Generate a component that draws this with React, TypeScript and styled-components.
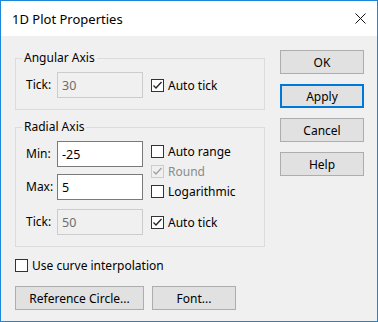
import styled, { createGlobalStyle } from "styled-components";

const GlobalStyle = createGlobalStyle`
  html, body {
    margin: 0;
    padding: 0;
    background: #ffffff;
  }
  * {
    box-sizing: border-box;
  }
`;

const uiFont = `"Noto Sans", "Open Sans", "Liberation Sans", sans-serif`;

const Window = styled.div`
  width: 378px;
  height: 322px;
  border: 1px solid #1c86d9;
  display: flex;
  flex-direction: column;
  font-family: ${uiFont};
  font-size: 12px;
  color: #000000;
`;

const TitleBar = styled.div`
  height: 35px;
  background: #ffffff;
  display: flex;
  align-items: center;
  justify-content: space-between;
  padding: 0 11px 0 11px;
`;

const Title = styled.span`
  font-size: 13px;
  color: #000000;
`;

const Body = styled.div`
  flex: 1;
  background: #f0f0f0;
  display: flex;
  gap: 15px;
  padding: 14px 12px 0 14px;
`;

const LeftCol = styled.div`
  width: 250px;
  display: flex;
  flex-direction: column;
`;

const RightCol = styled.div`
  width: 84px;
  display: flex;
  flex-direction: column;
  gap: 10px;
`;

const GroupBox = styled.fieldset<{ $top?: number }>`
  margin: ${(p) => p.$top ?? 0}px 0 0 0;
  padding: 0 10px 11px 10px;
  border: 1px solid #dcdcdc;
  min-width: 0;
`;

const Legend = styled.legend`
  margin-left: -4px;
  padding: 0 2px;
  line-height: 16px;
  font-size: 12px;
`;

const GroupContent = styled.div`
  margin-top: 6px;
  display: flex;
  flex-direction: column;
`;

const FieldRow = styled.div<{ $gap?: number }>`
  display: flex;
  align-items: center;
  margin-top: ${(p) => p.$gap ?? 0}px;
`;

const FieldLabel = styled.span`
  width: 31px;
  line-height: 16px;
`;

const TextBox = styled.div<{ $disabled?: boolean }>`
  width: 86px;
  height: 26px;
  padding: 0 4px;
  display: flex;
  align-items: center;
  background: ${(p) => (p.$disabled ? "#f0f0f0" : "#ffffff")};
  border: 1px solid ${(p) => (p.$disabled ? "#cccccc" : "#7a7a7a")};
  color: ${(p) => (p.$disabled ? "#6d6d6d" : "#000000")};
  font-size: 12.5px;
`;

const Split = styled.div`
  display: flex;
`;

const InputStack = styled.div`
  display: flex;
  flex-direction: column;
  gap: 7px;
`;

const CheckStack = styled.div`
  display: flex;
  flex-direction: column;
  margin-left: 8px;
`;

const CheckItem = styled.div<{ $disabled?: boolean }>`
  display: flex;
  align-items: center;
  height: 20px;
  color: ${(p) => (p.$disabled ? "#8a8a8a" : "#000000")};
`;

const Box = styled.span<{ $disabled?: boolean }>`
  width: 13px;
  height: 13px;
  flex: none;
  margin-right: 4px;
  background: ${(p) => (p.$disabled ? "#f0f0f0" : "#ffffff")};
  border: 1px solid ${(p) => (p.$disabled ? "#cccccc" : "#333333")};
  display: flex;
  align-items: center;
  justify-content: center;
`;

const ButtonRow = styled.div`
  display: flex;
  gap: 8px;
  margin-top: 11px;
`;

const Button = styled.div<{ $width?: number; $focused?: boolean }>`
  width: ${(p) => p.$width ?? 84}px;
  height: 24px;
  display: flex;
  align-items: center;
  justify-content: center;
  background: #e1e1e1;
  border: ${(p) => (p.$focused ? "2px solid #0078d7" : "1px solid #adadad")};
  font-size: 12px;
`;

function Check({
  label,
  checked,
  disabled,
}: {
  label: string;
  checked?: boolean;
  disabled?: boolean;
}) {
  return (
    <CheckItem $disabled={disabled}>
      <Box $disabled={disabled}>
        {checked && (
          <svg width="11" height="11" viewBox="0 0 11 11">
            <path
              d="M1.5 5.5 L4 8 L9.5 2"
              fill="none"
              stroke={disabled ? "#a0a0a0" : "#222222"}
              strokeWidth="1.3"
            />
          </svg>
        )}
      </Box>
      {label}
    </CheckItem>
  );
}

function App() {
  return (
    <>
      <GlobalStyle />
      <Window>
        <TitleBar>
          <Title>1D Plot Properties</Title>
          <svg width="11" height="11" viewBox="0 0 11 11">
            <path d="M0.5 0.5 L10.5 10.5 M10.5 0.5 L0.5 10.5" stroke="#111" strokeWidth="1" />
          </svg>
        </TitleBar>
        <Body>
          <LeftCol>
            <GroupBox>
              <Legend>Angular Axis</Legend>
              <GroupContent>
                <FieldRow>
                  <FieldLabel>Tick:</FieldLabel>
                  <TextBox $disabled>30</TextBox>
                  <CheckStack>
                    <Check label="Auto tick" checked />
                  </CheckStack>
                </FieldRow>
              </GroupContent>
            </GroupBox>

            <GroupBox $top={9}>
              <Legend>Radial Axis</Legend>
              <GroupContent>
                <Split>
                  <InputStack>
                    <FieldRow>
                      <FieldLabel>Min:</FieldLabel>
                      <TextBox>-25</TextBox>
                    </FieldRow>
                    <FieldRow>
                      <FieldLabel>Max:</FieldLabel>
                      <TextBox>5</TextBox>
                    </FieldRow>
                  </InputStack>
                  <CheckStack>
                    <Check label="Auto range" />
                    <Check label="Round" checked disabled />
                    <Check label="Logarithmic" />
                  </CheckStack>
                </Split>
                <FieldRow $gap={8}>
                  <FieldLabel>Tick:</FieldLabel>
                  <TextBox $disabled>50</TextBox>
                  <CheckStack>
                    <Check label="Auto tick" checked />
                  </CheckStack>
                </FieldRow>
              </GroupContent>
            </GroupBox>

            <FieldRow $gap={8}>
              <Check label="Use curve interpolation" />
            </FieldRow>

            <ButtonRow>
              <Button $width={129}>Reference Circle...</Button>
              <Button>Font...</Button>
            </ButtonRow>
          </LeftCol>

          <RightCol>
            <Button>OK</Button>
            <Button $focused>Apply</Button>
            <Button>Cancel</Button>
            <Button>Help</Button>
          </RightCol>
        </Body>
      </Window>
    </>
  );
}

export default App;
